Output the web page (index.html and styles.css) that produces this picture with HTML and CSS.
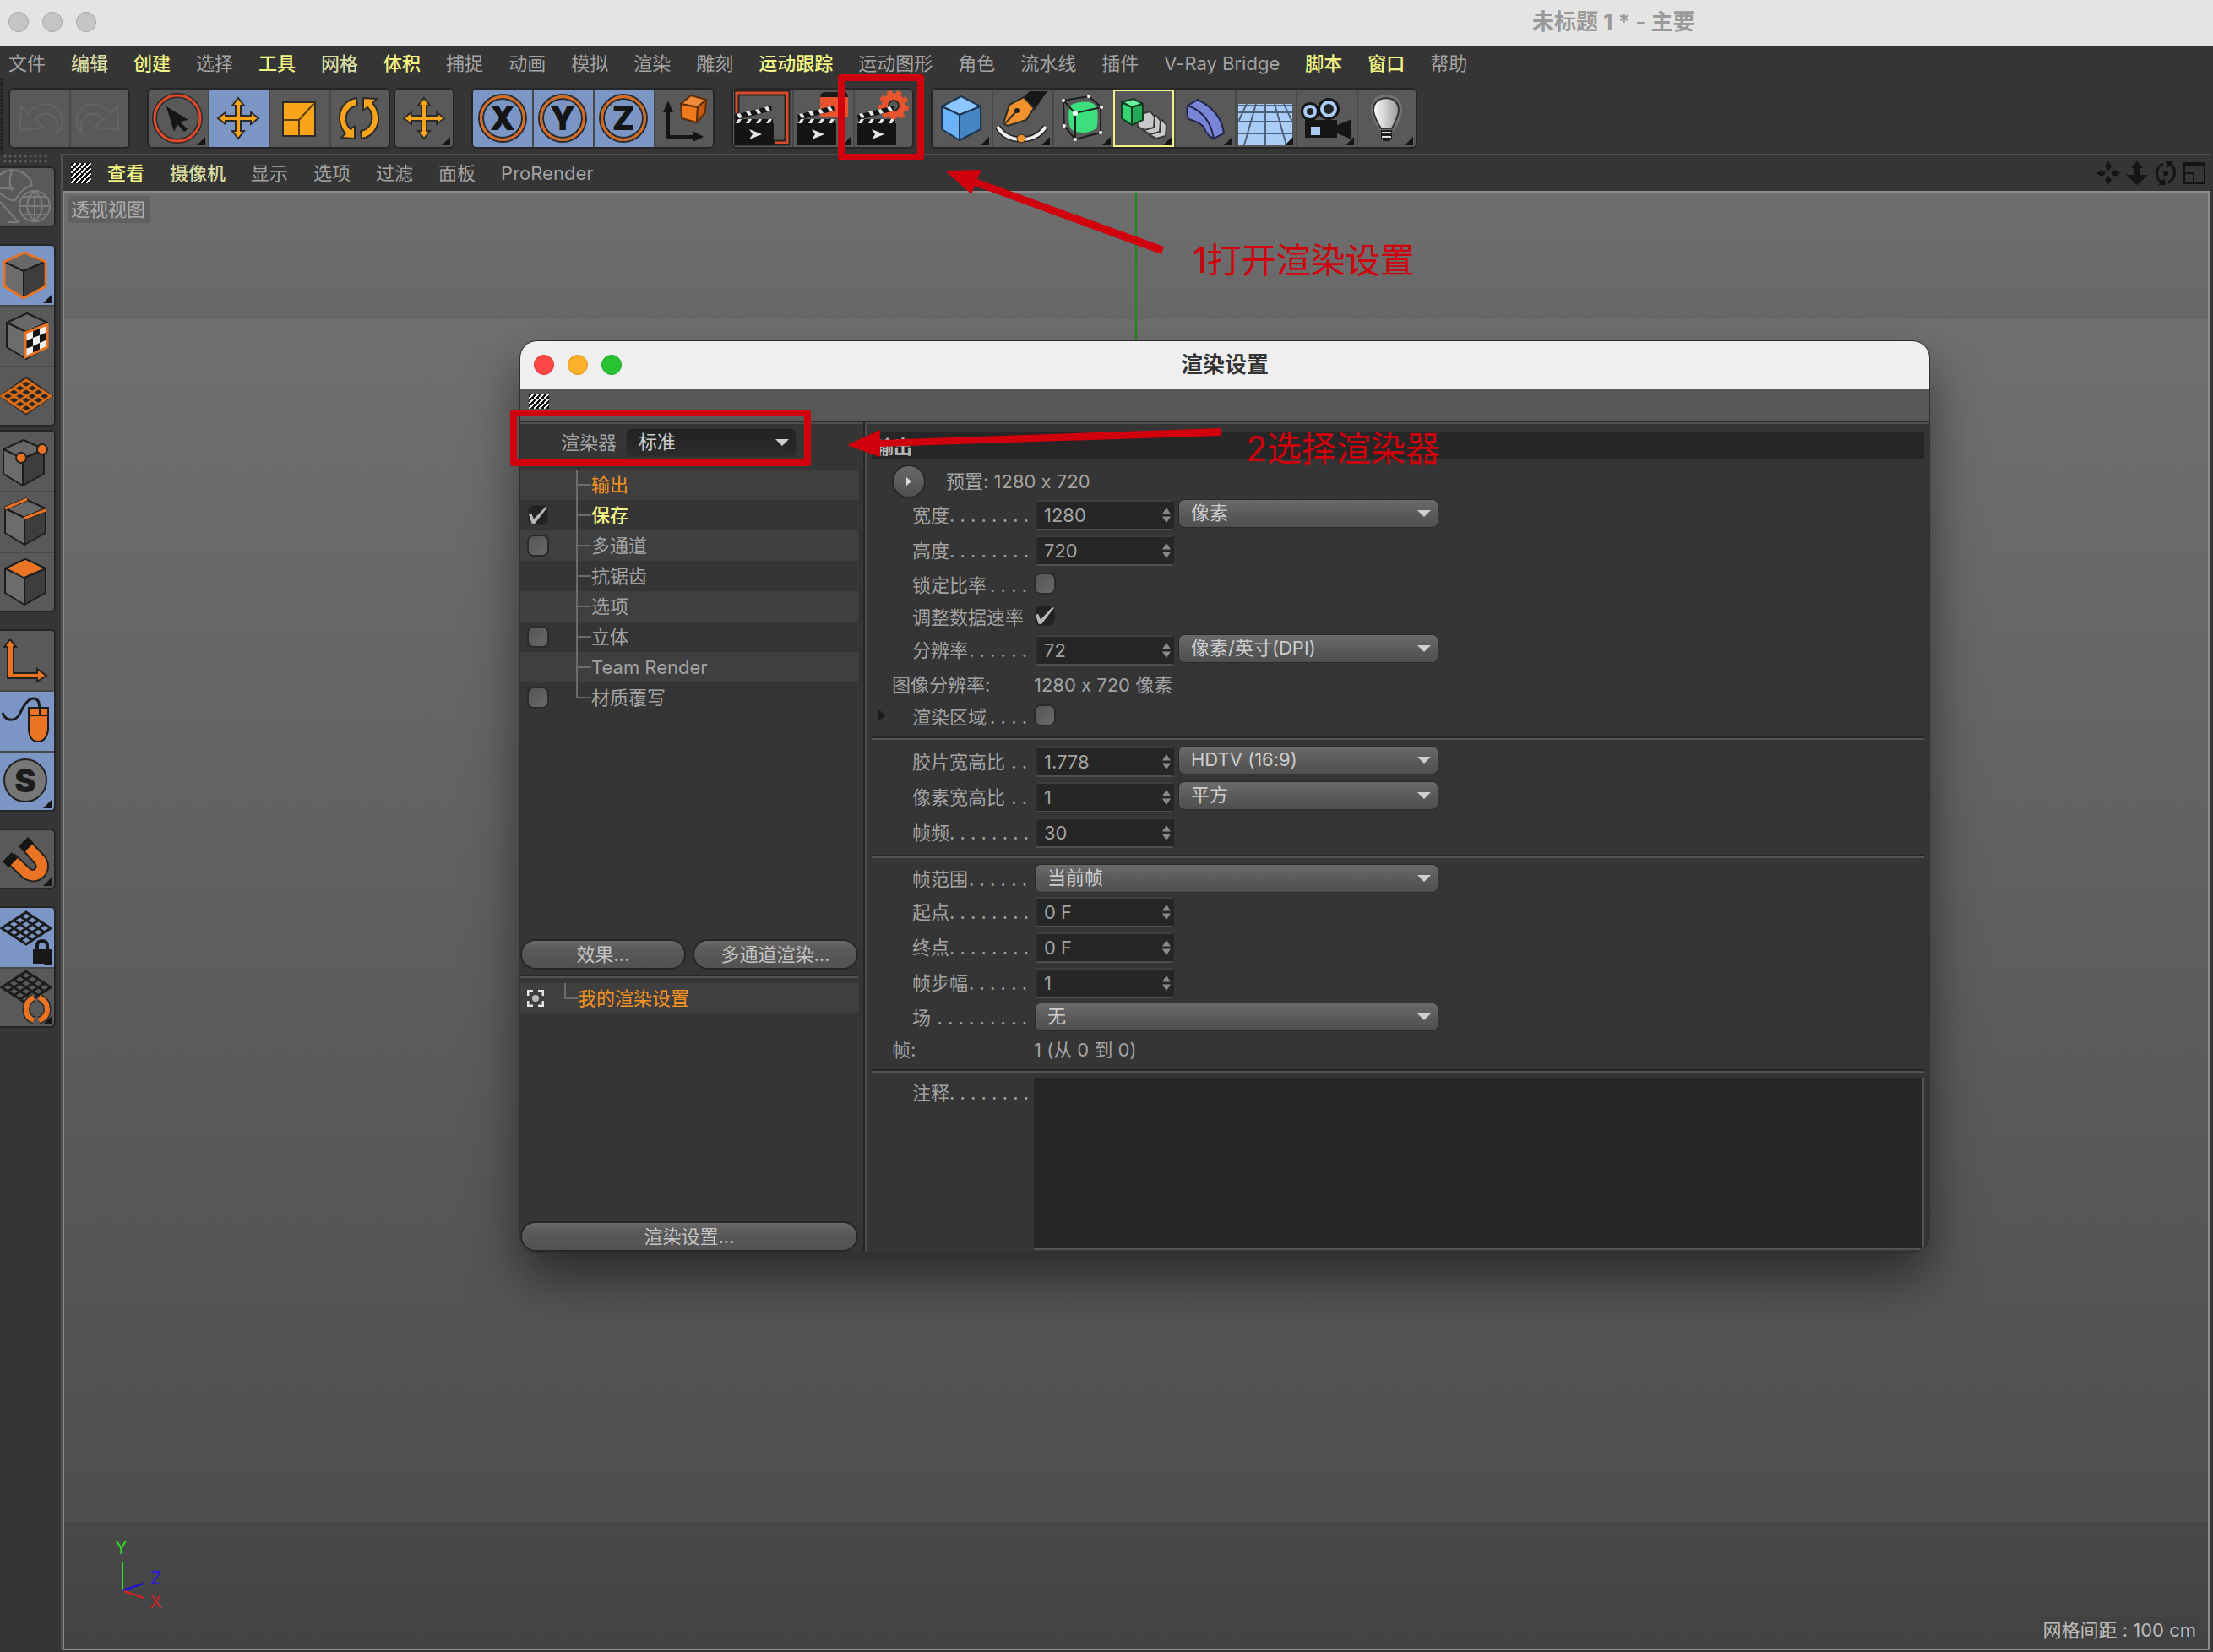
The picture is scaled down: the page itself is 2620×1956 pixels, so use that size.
FILE: index.html
```html
<!DOCTYPE html>
<html lang="zh-CN">
<head>
<meta charset="utf-8">
<title>未标题 1 * - 主要</title>
<link rel="stylesheet" href="styles.css">
</head>
<body>
<svg class="defs" aria-hidden="true">
  <defs>
    <symbol id="move" viewBox="0 0 68 68"><path d="M34 10l7 9h-4v12h12v-4l9 7-9 7v-4H37v12h4l-7 9-7-9h4V37H19v4l-9-7 9-7v4h12V19h-4z" fill="#f9a41b" stroke="#2b2b2b" stroke-width="2"/></symbol>
    <symbol id="clap" viewBox="0 0 46 48">
      <path d="M0 22h46v26H0z" fill="#141414"/>
      <path d="M0 12L43 1l1 6L1 18z" fill="#141414"/>
      <path d="M1 17h44v6H1z" fill="#141414"/>
      <path d="M2 11l4-1 3 5-4 1zM13 8l4-1 3 5-4 1zM24 6l4-1 3 5-4 1zM35 3l4-1 3 5-4 1zM4 17h4l-3 5H1zM16 17h4l-3 5h-4zM28 17h4l-3 5h-4zM40 17h4l-3 5h-4z" fill="#e8e8e8"/>
      <path d="M17 29l15 6-15 6 4-6z" fill="#e8e8e8"/>
    </symbol>
    <symbol id="cube" viewBox="0 0 52 56"><g stroke="#1c1c1c" stroke-width="2" stroke-linejoin="round"><path d="M26 1L2 12l23 11 25-11z" fill="#686868"/><path d="M2 12v29l23 14V23z" fill="#6c6c6c"/><path d="M50 12v29L25 55V23z" fill="#3d3d3d"/></g></symbol>
    <symbol id="mesh" viewBox="0 0 62 42"><path d="M31 2L2 21l29 19 29-19zM24 7l29 19M17 12l29 19M9 16l29 19M38 7L9 26M45 12L16 31M53 16L24 35" fill="none" stroke="currentColor" stroke-width="3"/></symbol>
    <g id="arcs" stroke="#2b2b2b" stroke-width="2" stroke-linejoin="round"><path d="M31 10C18 12 10 23 11 36c1 8 4 13 7 16l-5 5 16 1V43l-5 4c-5-5-7-12-4-19 2-5 6-8 12-9z"/><path d="M37 58c13-2 21-13 20-26-1-8-4-13-7-16l5-5-16-1v15l5-4c5 5 7 12 4 19-2 5-6 8-12 9z"/></g>
    <linearGradient id="bulb"><stop offset="0" stop-color="#fff"/><stop offset="1" stop-color="#999"/></linearGradient>
  </defs>
</svg>

<header class="titlebar">
  <div class="lights"><i></i><i></i><i></i></div>
  <h1>未标题 1 * - 主要</h1>
</header>

<nav class="menu main-menu">
  <a href="#">文件</a><a href="#" class="pale">编辑</a><a href="#" class="hot">创建</a><a href="#">选择</a><a href="#" class="hot">工具</a><a href="#" class="pale">网格</a><a href="#" class="hot">体积</a><a href="#">捕捉</a><a href="#">动画</a><a href="#">模拟</a><a href="#">渲染</a><a href="#">雕刻</a><a href="#" class="hot">运动跟踪</a><a href="#">运动图形</a><a href="#">角色</a><a href="#">流水线</a><a href="#">插件</a><a href="#">V-Ray Bridge</a><a href="#" class="hot">脚本</a><a href="#" class="hot">窗口</a><a href="#">帮助</a>
</nav>

<div class="toolbar">
  <div class="group">
    <button aria-label="撤销"><svg viewBox="0 0 68 68"><path d="M11 48l1-29 8 9c12-13 29-14 37-2 6 9 4 19-3 26 2-10 1-18-6-22-6-3-13-2-19 5l10 10z" fill="none" stroke="#646464" stroke-width="2"/></svg></button>
    <button aria-label="重做"><svg viewBox="0 0 68 68"><path d="M57 48l-1-29-8 9C36 15 19 14 11 26c-6 9-4 19 3 26-2-10-1-18 6-22 6-3 13-2 19 5L29 45z" fill="none" stroke="#646464" stroke-width="2"/></svg></button>
  </div>
  <div class="group">
    <button class="more" aria-label="选择"><svg viewBox="0 0 68 68"><circle cx="33" cy="34" r="27" fill="none" stroke="#2a2a2a" stroke-width="6"/><circle cx="33" cy="34" r="27" fill="none" stroke="#e0492b" stroke-width="3"/><path d="M20 20l26 16-10 2 9 9-4 3-8-9-4 9z" fill="#151515"/></svg></button>
    <button class="on" aria-label="移动"><svg><use href="#move"/></svg></button>
    <button aria-label="缩放"><svg viewBox="0 0 68 68"><path d="M15 15h38v40H15z" fill="#f9a41b" stroke="#2b2b2b" stroke-width="2"/><path d="M15 36h19v19M34 36l19-21" fill="none" stroke="#5a3c0c" stroke-width="2"/></svg></button>
    <button aria-label="旋转"><svg viewBox="0 0 68 68"><use href="#arcs" fill="#f9a41b"/></svg></button>
  </div>
  <div class="group near">
    <button class="more" aria-label="最近工具"><svg><use href="#move"/></svg></button>
  </div>
  <div class="group">
    <button class="on axis"><span>X</span></button>
    <button class="on axis"><span>Y</span></button>
    <button class="on axis"><span>Z</span></button>
    <button aria-label="坐标系统"><svg viewBox="0 0 68 68"><path d="M16 24v32h32" fill="none" stroke="#151515" stroke-width="4"/><path d="M10 27l6-14 6 14zM45 49l13 7-13 6z" fill="#151515"/><g stroke="#5e2c08" stroke-width="2" stroke-linejoin="round"><path d="M31 17l12-10 18 5-10 9z" fill="#f08a3a"/><path d="M31 17l20 4-1 18-18-5z" fill="#ef7a1c"/><path d="M61 12l-10 9-1 18 10-12z" fill="#c75a0c"/></g></svg></button>
  </div>
  <div class="group">
    <button aria-label="渲染活动视图"><svg viewBox="0 0 68 68"><path d="M3 4h60v59H3z" fill="none" stroke="#262626" stroke-width="7"/><path d="M3 28V4h60v59H48" fill="none" stroke="#d84a2b" stroke-width="3"/><use href="#clap" x="1" y="18" width="46" height="48"/></svg></button>
    <button class="more" aria-label="渲染到图片查看器"><svg viewBox="0 0 68 68"><path d="M31 9q0-6 6-6h22q5 0 5 6v24H31z" fill="#e8542d"/><path d="M31 9q0-6 6-6h22q5 0 5 6z" fill="#1c1c1c"/><use href="#clap" x="4" y="18" width="46" height="48"/></svg></button>
    <button aria-label="编辑渲染设置"><svg viewBox="0 0 68 68"><circle cx="47" cy="19" r="15" fill="none" stroke="#e8542d" stroke-width="6" stroke-dasharray="5.8 4.67"/><circle cx="47" cy="19" r="10" fill="none" stroke="#e8542d" stroke-width="9"/><circle cx="47" cy="19" r="6" fill="#595959" stroke="#262626" stroke-width="2"/><use href="#clap" x="4" y="18" width="46" height="48"/></svg></button>
  </div>
  <div class="group">
    <button class="more" aria-label="立方体"><svg viewBox="0 0 68 68"><g stroke="#1d3550" stroke-width="2" stroke-linejoin="round"><path d="M33 8L10 20l21 10 25-10z" fill="#8cc6ff"/><path d="M10 20v27l21 13V30z" fill="#6bb2f7"/><path d="M56 20v27L31 60V30z" fill="#4686c4"/></g></svg></button>
    <button class="more" aria-label="画笔"><svg viewBox="0 0 68 68"><path d="M36 9l7-7h21L48 25z" fill="#171717"/><path d="M36 9l12 13-9 14-22 7-5-3 7-22z" fill="#f2922e" stroke="#2b2b2b" stroke-width="2"/><path d="M14 40l14-15" stroke="#2b2b2b" stroke-width="2"/><circle cx="28" cy="25" r="3" fill="#222"/><path d="M5 44q9 15 28 15t29-15" fill="none" stroke="#222" stroke-width="7"/><path d="M5 44q9 15 28 15t29-15" fill="none" stroke="#eee" stroke-width="4"/><circle cx="33" cy="58" r="5" fill="#f2922e" stroke="#222"/></svg></button>
    <button class="more" aria-label="细分曲面"><svg viewBox="0 0 68 68"><path d="M18 22q0-5 12-7 14-2 19 4 4 6 2 24-2 7-17 8-12 0-15-6-3-10-1-23z" fill="#3be07c"/><path d="M11 13l30-5 15 13-31 7zM25 28v31l30-8V21M25 59L12 43l-1-30" fill="none" stroke="#1d1d1d" stroke-width="2"/><g fill="#fff"><circle cx="11" cy="13" r="2"/><circle cx="41" cy="8" r="2"/><circle cx="56" cy="21" r="2"/><circle cx="25" cy="28" r="3"/><circle cx="55" cy="51" r="2"/><circle cx="25" cy="59" r="2"/><circle cx="12" cy="43" r="2"/></g></svg></button>
    <button class="more picked" aria-label="阵列"><svg viewBox="0 0 68 68"><g fill="#c9c9c9" stroke="#3a3a3a" stroke-width="2"><path d="M40 40l16-4 5 6-1 13-11 3-8-4z"/><path d="M33 35l16-4 5 6-1 13-11 3-8-4z"/><path d="M26 30l16-4 5 6-1 13-11 3-8-4z"/></g><g stroke="#123d22" stroke-width="2" stroke-linejoin="round"><path d="M8 15l14-4 11 6-13 4z" fill="#6af09c"/><path d="M8 15l12 6v21L8 34z" fill="#35d472"/><path d="M33 17v19l-13 6V21z" fill="#25a858"/></g></svg></button>
    <button class="more" aria-label="变形器"><svg viewBox="0 0 68 68"><path d="M14 19l12-7q28 14 31 40l-12 6q-8-3-12-14-6-6-18-9-3-8-1-16z" fill="#7985d8" stroke="#23264a" stroke-width="2"/><path d="M14 19q26 9 31 39" fill="none" stroke="#23264a" stroke-width="2"/></svg></button>
    <button class="more" aria-label="地面"><svg viewBox="0 0 68 68"><path d="M2 17h64v49H2z" fill="#aacdf8"/><path d="M2 19h64M2 27h64M2 38h64M2 52h64M34 17v49M23 17L9 66M45 17l14 49M12 17L2 38M56 17l10 21" stroke="#4f6079" stroke-width="2"/></svg></button>
    <button class="more" aria-label="摄像机"><svg viewBox="0 0 68 68"><path d="M10 37h36v19H10zM48 43l14-6v20l-14-6z" fill="#151515" stroke="#151515" stroke-width="2"/><circle cx="15" cy="26" r="7" fill="#555" stroke="#151515" stroke-width="8"/><circle cx="15" cy="26" r="6" fill="#222" stroke="#a9cbf5" stroke-width="4"/><circle cx="37" cy="23" r="9" fill="#555" stroke="#151515" stroke-width="8"/><circle cx="37" cy="23" r="8" fill="#222" stroke="#a9cbf5" stroke-width="4"/><path d="M16 44h11v10H16z" fill="#a9cbf5"/></svg></button>
    <button class="more" aria-label="灯光"><svg viewBox="0 0 68 68"><path d="M34 6q20 1 19 20-1 9-9 22H26q-9-13-10-22Q15 7 34 6z" fill="#999" opacity=".4"/><path d="M34 10q15 1 15 15-1 8-8 21H28q-8-13-9-21 0-14 15-15z" fill="url(#bulb)" stroke="#333" stroke-width="2"/><path d="M28 48h13v9l-3 4h-7l-3-4z" fill="#1a1a1a"/><path d="M29 51h11M29 56h11" stroke="#ddd" stroke-width="2"/></svg></button>
  </div>
</div>

<div class="workspace">
  <aside class="tools">
    <i class="handle"></i>
    <div class="group">
      <button aria-label="转为可编辑对象"><svg viewBox="0 0 64 68"><g fill="none" stroke="#7c7c7c" stroke-width="2"><path d="M0 8q12-9 24-4 12 5 14 16-12 4-18 15-2 6-9 2L0 30M0 24h16M14 3q-5 14 0 24M0 40l22 24H10"/><circle cx="41" cy="45" r="18"/><path d="M23 45h36M41 27v36M27 34h28M27 55h28M41 27q-18 18 0 36M41 27q18 18 0 36"/></g></svg></button>
    </div>
    <div class="group">
      <button class="on more" aria-label="模型"><svg viewBox="0 0 64 68"><use href="#cube" x="3" y="6" width="52" height="56"/><path d="M29 7L5 18v29l23 14 26-14V18z" fill="none" stroke="#ea7423" stroke-width="3"/></svg></button>
      <button aria-label="纹理"><svg viewBox="0 0 64 68"><use href="#cube" x="6" y="7" width="52" height="56"/><path d="M30 31l26-10v27L30 60z" fill="#eee"/><path d="M39 27l8-3v10l-8 3zM30 41l9-4v10l-9 3zM47 34l9-4v9l-9 4zM39 47l8-4v10l-8 3z" fill="#151515"/><path d="M30 31l26-10v27L30 60z" fill="none" stroke="#ea7423" stroke-width="3"/></svg></button>
      <button class="orange" aria-label="工作平面"><svg viewBox="0 0 64 68"><path d="M31 14L2 35l29 20 29-20z" fill="#262626" stroke="#222" stroke-width="4"/><use href="#mesh" x="0" y="14" width="62" height="42"/></svg></button>
    </div>
    <div class="group near">
      <button aria-label="点"><svg viewBox="0 0 64 68"><use href="#cube" x="2" y="8" width="52" height="56"/><g fill="#ea7423" stroke="#222" stroke-width="2"><circle cx="25" cy="30" r="6"/><circle cx="50" cy="20" r="6"/></g></svg></button>
      <button aria-label="边"><svg viewBox="0 0 64 68"><use href="#cube" x="4" y="7" width="52" height="56"/><path d="M6 19L32 8M28 31l26-10" stroke="#222" stroke-width="5"/><path d="M6 19L32 8M28 31l26-10" stroke="#ea7423" stroke-width="3"/></svg></button>
      <button aria-label="多边形"><svg viewBox="0 0 64 68"><use href="#cube" x="4" y="7" width="52" height="56"/><path d="M30 9L9 19l19 10 23-10z" fill="#ea7423"/></svg></button>
    </div>
    <div class="group">
      <button aria-label="启用轴心"><svg viewBox="0 0 64 68"><path d="M12 9l7 9h-3v31h28v-5l11 8-11 7v-4H9V18H5z" fill="#ea7423" stroke="#222" stroke-width="2"/></svg></button>
      <button class="on" aria-label="微调"><svg viewBox="0 0 64 68"><path d="M3 25c4 11 16 11 21 0S34 7 41 8c5 1 6 5 6 20" fill="none" stroke="#1c1c1c" stroke-width="3"/><path d="M34 19h23v26q-2 14-12 14T34 45z" fill="#ea7423" stroke="#1c1c1c" stroke-width="2"/><path d="M34 28h23M47 18v10" stroke="#1c1c1c" stroke-width="2"/></svg></button>
      <button class="on more solo"><span>S</span></button>
    </div>
    <div class="group">
      <button class="more" aria-label="捕捉"><svg viewBox="0 0 64 68"><path d="M36 13l17 18c6 8 5 18-1 24-8 8-18 6-25 1L8 38l10-9 17 16c3 3 6 2 7 0s1-4-1-6L26 22z" fill="#ea7423" stroke="#222" stroke-width="2"/><path d="M33 8l7 7-11 11-7-7zM14 26l7 7-11 11-7-7z" fill="#151515"/></svg></button>
    </div>
    <div class="group">
      <button class="on more" aria-label="锁定工作平面"><svg viewBox="0 0 64 68"><use href="#mesh" x="0" y="2" width="62" height="42"/><path d="M39 48h3v-4q0-8 8-8t8 8v4h3v17H39z" fill="#181818"/><path d="M46 48v-4q0-4 4-4t4 4v4z" fill="#7b96c4"/></svg></button>
      <button class="more" aria-label="平面工作平面"><svg viewBox="0 0 64 68"><use href="#mesh" x="0" y="2" width="62" height="42"/><g fill="none"><path d="M40 35q-9 4-9 14t9 13M46 35q10 4 10 14t-10 13" stroke="#2b2b2b" stroke-width="9"/><path d="M40 35q-9 4-9 14t9 13M46 35q10 4 10 14t-10 13" stroke="#ea7423" stroke-width="6"/></g></svg></button>
    </div>
  </aside>

  <main class="panel">
    <div class="menu view-menu">
      <i class="grip"></i>
      <a href="#" class="hot">查看</a><a href="#" class="pale">摄像机</a><a href="#">显示</a><a href="#">选项</a><a href="#">过滤</a><a href="#">面板</a><a href="#">ProRender</a>
      <div class="nav-icons">
        <svg viewBox="0 0 28 28"><path d="M14 0l4 6-4 5-4-5zM14 17l4 5-4 6-4-6zM0 14l6-4 5 4-5 4zM17 14l5-4 6 4-6 4z" fill="#141414"/></svg>
        <svg viewBox="0 0 28 28"><path d="M14 0l7 8h-4v8h10L14 28 1 16h10V8H7z" fill="#141414"/></svg>
        <svg viewBox="0 0 28 28"><path d="M11 3C2 7 1 19 9 25M17 25c9-4 10-16 2-22" fill="none" stroke="#141414" stroke-width="3"/><path d="M14 0h9l-7 8zM14 28H5l7-8z" fill="#141414"/><circle cx="14" cy="14" r="3" fill="#141414"/></svg>
        <svg viewBox="0 0 28 28"><path d="M2 2h24v24H2zM2 14h11v12" fill="none" stroke="#141414" stroke-width="2"/><path d="M1 1h26v4H1z" fill="#141414"/></svg>
      </div>
    </div>

    <div class="view">
      <span class="tag">透视视图</span>
      <span class="tag scale">网格间距 : 100 cm</span>
      <i class="y-line"></i>
      <svg class="gizmo" viewBox="0 0 80 100"><g fill="none" stroke-width="2"><path d="M15 38v33" stroke="#2ee620"/><path d="M15 71l25-8" stroke="#1d08e8"/><path d="M17 72l23 8" stroke="#e61c24"/></g><text x="6" y="28" fill="#35d62a">Y</text><text x="48" y="64" fill="#2a18d8">Z</text><text x="47" y="92" fill="#c8262c">X</text></svg>

      <section class="dialog">
        <header>
          <div class="lights live"><i></i><i></i><i></i></div>
          <h2>渲染设置</h2>
        </header>
        <div class="strip"><i class="grip"></i></div>
        <div class="body">
          <div class="side">
            <div class="renderer">
              <label for="renderer">渲染器</label>
              <span class="select dark"><select id="renderer"><option>标准</option></select></span>
            </div>
            <ul class="tree">
              <li><span class="name current">输出</span></li>
              <li><input type="checkbox" id="t1" checked><label for="t1" class="name hot">保存</label></li>
              <li><input type="checkbox" id="t2"><label for="t2" class="name">多通道</label></li>
              <li><span class="name">抗锯齿</span></li>
              <li><span class="name">选项</span></li>
              <li><input type="checkbox" id="t3"><label for="t3" class="name">立体</label></li>
              <li><span class="name">Team Render</span></li>
              <li><input type="checkbox" id="t4"><label for="t4" class="name">材质覆写</label></li>
            </ul>
            <div class="pair"><button class="pill">效果...</button><button class="pill">多通道渲染...</button></div>
            <hr>
            <ul class="tree presets">
              <li><svg viewBox="0 0 20 20"><path d="M1 7V1h6M13 1h6v6M19 13v6h-6M7 19H1v-6" fill="none" stroke="#e4e4e4" stroke-width="3"/><circle cx="10" cy="10" r="4" fill="#bbb"/></svg><span class="name current">我的渲染设置</span></li>
            </ul>
            <div class="foot"><button class="pill">渲染设置...</button></div>
          </div>

          <form class="output">
            <h3>输出</h3>
            <div class="preset"><button type="button" class="round" aria-label="预置"></button><span>预置: 1280 x 720</span></div>
            <div class="row"><label for="f1">宽度<span>. . . . . . . .</span></label><span class="field"><input id="f1" value="1280"><i></i></span><span class="select"><select aria-label="单位"><option>像素</option></select></span></div>
            <div class="row"><label for="f2">高度<span>. . . . . . . .</span></label><span class="field"><input id="f2" value="720"><i></i></span></div>
            <div class="row low"><label for="f3">锁定比率<span>. . . .</span></label><input type="checkbox" id="f3"></div>
            <div class="row low"><label for="f4">调整数据速率</label><input type="checkbox" id="f4" checked></div>
            <div class="row"><label for="f5">分辨率<span>. . . . . .</span></label><span class="field"><input id="f5" value="72"><i></i></span><span class="select"><select aria-label="分辨率单位"><option>像素/英寸(DPI)</option></select></span></div>
            <div class="row low info"><span>图像分辨率:</span><output>1280 x 720 像素</output></div>
            <div class="row low fold"><label for="f6">渲染区域<span>. . . .</span></label><input type="checkbox" id="f6"></div>
            <hr>
            <div class="row"><label for="f7">胶片宽高比<span>. .</span></label><span class="field"><input id="f7" value="1.778"><i></i></span><span class="select"><select aria-label="胶片格式"><option>HDTV (16:9)</option></select></span></div>
            <div class="row"><label for="f8">像素宽高比<span>. .</span></label><span class="field"><input id="f8" value="1"><i></i></span><span class="select"><select aria-label="像素格式"><option>平方</option></select></span></div>
            <div class="row"><label for="f9">帧频<span>. . . . . . . .</span></label><span class="field"><input id="f9" value="30"><i></i></span></div>
            <hr>
            <div class="row low"><label for="f10">帧范围<span>. . . . . .</span></label><span class="select wide"><select id="f10"><option>当前帧</option></select></span></div>
            <div class="row"><label for="f11">起点<span>. . . . . . . .</span></label><span class="field"><input id="f11" value="0 F"><i></i></span></div>
            <div class="row"><label for="f12">终点<span>. . . . . . . .</span></label><span class="field"><input id="f12" value="0 F"><i></i></span></div>
            <div class="row"><label for="f13">帧步幅<span>. . . . . .</span></label><span class="field"><input id="f13" value="1"><i></i></span></div>
            <div class="row low"><label for="f14">场<span>. . . . . . . . .</span></label><span class="select wide"><select id="f14"><option>无</option></select></span></div>
            <div class="row low info"><span>帧:</span><output>1 (从 0 到 0)</output></div>
            <hr>
            <div class="row notes"><label for="f15">注释<span>. . . . . . . .</span></label><textarea id="f15"></textarea></div>
          </form>
        </div>
      </section>
    </div>
  </main>
</div>

<div class="notes-layer">
  <svg viewBox="0 0 1720 600"><g fill="none" stroke="#d0000d" stroke-width="8" stroke-linejoin="round"><rect x="996" y="92" width="94" height="94"/><rect x="608" y="489" width="348" height="59"/></g><g fill="#d0000d"><path d="M1119 202l43-1-5 11 221 80-3 9-221-81-4 10z"/><path d="M1003 527l39-18v12l403-14v9l-403 13v12z"/></g></svg>
  <p class="step one">1打开渲染设置</p>
  <p class="step two">2选择渲染器</p>
</div>
</body>
</html>
```
FILE: styles.css
```css
* { box-sizing: border-box; }
body {
  margin: 0;
  min-height: 100vh;
  display: flex;
  flex-direction: column;
  position: relative;
  background: #353535;
  color: #a3a3a3;
  font: 22px/32px Inter, "Noto Sans CJK SC", sans-serif;
  font-feature-settings: "calt" 0;
  overflow-x: hidden;
}
button, input, select, textarea { font: inherit; font-feature-settings: inherit; color: inherit; margin: 0; padding: 0; border: 0; background: none; }
a { color: inherit; text-decoration: none; }
h1, h2, h3, p, ul { margin: 0; padding: 0; list-style: none; }
.defs { position: absolute; width: 0; height: 0; }
.hot { color: #f3f584; font-weight: 500; }
.pale { color: #d9dba0; font-weight: 500; }

/* main window title */
.titlebar { display: flex; align-items: center; height: 55px; background: #e4e4e4; border-bottom: 1px solid #111; padding: 0 0 2px 10px; }
.titlebar h1 { margin-left: 1700px; font-size: 26px; line-height: 32px; font-weight: 700; color: #999; white-space: nowrap; }
.lights { display: flex; gap: 16px; }
.lights i { width: 24px; height: 24px; border-radius: 50%; background: #c5c5c5; border: 1px solid #a6a6a6; }
.lights.live i:nth-child(1) { background: #fd4747; border-color: #e03638; }
.lights.live i:nth-child(2) { background: #fdb02a; border-color: #dd951c; }
.lights.live i:nth-child(3) { background: #29c232; border-color: #1fa626; }

.menu { display: flex; align-items: center; gap: 30px; white-space: nowrap; }
.main-menu { height: 39px; padding-left: 10px; }

/* icon buttons */
.toolbar { display: flex; gap: 20px; padding: 10px 0 6px 10px;
  background: radial-gradient(circle at 2px 2px, #1c1c1c 1px, transparent 2px) 0 18px / 4px 4px repeat-y; }
.group { display: flex; border: 2px solid #262626; border-radius: 6px; background: #595959; overflow: hidden; }
.group button { position: relative; display: flex; align-items: center; justify-content: center; width: 72px; height: 68px; flex: none; }
.group svg { width: 68px; height: 68px; flex: none; }
.toolbar button:first-child, .toolbar button:last-child { width: 70px; }
.toolbar button:only-child { width: 68px; }
.toolbar button + button { box-shadow: inset 2px 0 #484848; }
.toolbar .near { margin-left: -16px; }
.group .on { background: #7b96c4; }
.toolbar .picked { box-shadow: inset 0 0 0 2px #f0f28a; }
.more::after { content: ""; position: absolute; right: 3px; bottom: 2px; width: 10px; height: 10px; background: #151515; clip-path: polygon(100% 0, 100% 100%, 0 100%); }
.axis span {
  width: 54px; height: 54px; border-radius: 50%; border: 3px solid #d86a1e;
  box-shadow: 0 0 0 2px #2a2a2a, inset 0 0 0 2px #2a2a2a;
  font-size: 38px; line-height: 48px; font-weight: 900; color: #151515; text-align: center;
}

.workspace { flex: 1; display: flex; }
.tools { width: 72px; display: flex; flex-direction: column; gap: 20px; align-items: flex-start; }
.handle { width: 54px; height: 12px; margin: 1px 0 -18px 4px; background: radial-gradient(circle at 2px 2px, #5c5c5c 1px, transparent 2px) 0 0 / 6px 6px; }
.tools .group { flex-direction: column; border-left: 0; border-radius: 0 6px 6px 0; }
.tools .near { margin-top: -16px; }
.tools button { width: 64px; height: 72px; color: #1c1c1c; }
.tools button:first-child, .tools button:last-child { height: 70px; }
.tools button:only-child { height: 68px; }
.tools button + button { box-shadow: inset 0 2px #484848; }
.tools svg { width: 64px; }
.tools .orange { color: #d96c14; }
.solo span { width: 52px; height: 52px; margin-right: 4px; border-radius: 50%; border: 2px solid #222; background: #777; font-size: 38px; line-height: 48px; font-weight: 900; text-align: center; }

/* viewport panel */
.panel { flex: 1; display: flex; flex-direction: column; margin: 0 4px 2px 0; border: 2px solid #4f4f4f; border-width: 2px 0 0 2px; }
.view-menu { height: 42px; padding: 0 4px 0 10px; }
.grip { width: 24px; height: 24px; background: linear-gradient(135deg, transparent 34%, #eee 34% 66%, transparent 66%) 0 0 / 6px 6px #111; }
.view-menu .grip { margin-right: -11px; }
.nav-icons { margin-left: auto; display: flex; gap: 6px; }
.nav-icons svg { width: 28px; height: 28px; }
.view {
  flex: 1; position: relative; border: 2px solid #8c8c8c;
  background: linear-gradient(#6e6e6e, #686868 150px, #707070 150px, #4e4e4e calc(100% - 150px), #494949 calc(100% - 150px), #434343);
}
.tag { position: absolute; left: 4px; top: 4px; padding: 0 6px 0 4px; border-radius: 4px; background: rgba(60, 60, 60, .25); color: #acacac; }
.scale { left: auto; top: auto; right: 8px; bottom: 6px; color: #bcbcbc; }
.y-line { position: absolute; left: 1268px; top: 0; width: 2px; height: 180px; background: #1c8a1c; }
.gizmo { position: absolute; left: 54px; bottom: 40px; width: 80px; height: 100px; font-size: 22px; }

/* render settings window */
.dialog { position: absolute; left: 540px; right: 330px; top: 176px; border-radius: 20px; overflow: hidden; background: #353535; box-shadow: 0 0 0 1px #303030, 0 30px 60px rgba(0, 0, 0, .5); }
.dialog header { display: grid; grid-template-columns: 1fr auto 1fr; align-items: center; height: 57px; padding: 0 16px; background: #efefef; border-bottom: 1px solid #2e2e2e; }
.dialog h2 { font-size: 26px; line-height: 32px; font-weight: 700; color: #333; }
.strip { height: 39px; padding: 5px 10px; background: #585858; border-bottom: 2px solid #2a2a2a; box-shadow: 0 2px #505050; }
.strip .grip { display: block; height: 18px; }
.body { display: flex; }
.dialog hr { height: 4px; margin: 2px 0 8px; border: 0; border-top: 2px solid #262626; border-bottom: 2px solid #545454; }

.side { width: 408px; display: flex; flex-direction: column; flex: none; padding-right: 8px; }
.renderer { display: flex; gap: 12px; align-items: center; padding: 8px 0 16px 48px; }
.select { position: relative; width: 306px; height: 32px; border-radius: 6px; background: linear-gradient(#6a6a6a, #585858 60%, #505050); box-shadow: 0 0 0 1px #2a2a2a; color: #cdcdcd; }
.select select { appearance: none; width: 100%; height: 30px; padding: 0 40px 0 14px; line-height: 30px; display: block; }
.select::after { content: ""; position: absolute; right: 8px; top: 12px; width: 16px; height: 8px; background: #d0d0d0; clip-path: polygon(0 0, 100% 0, 50% 100%); pointer-events: none; }
.select.dark { width: 200px; background: linear-gradient(#222, #2c2c2c); box-shadow: 0 0 0 1px #303030; }
.select.wide { width: 476px; }

input[type=checkbox] { appearance: none; width: 22px; height: 22px; border-radius: 6px; background: linear-gradient(135deg, #555, #696969); box-shadow: 0 0 0 2px #2a2a2a; flex: none; }
input[type=checkbox]:checked { background: #222; box-shadow: 0 0 0 1px #2a2a2a; }
input[type=checkbox]:checked::before { content: ""; display: block; width: 22px; height: 22px; background: #b8b8b8; clip-path: polygon(0 45%, 14% 40%, 27% 70%, 90% 4%, 100% 8%, 32% 96%, 16% 94%); }

.tree li { position: relative; display: flex; align-items: center; height: 36px; padding-left: 10px; }
.tree li:nth-child(odd) { background: #3f3f3f; }
.tree .name { margin-left: auto; width: 316px; }
.tree .current { color: #f7931e; }
.tree li::before { content: ""; position: absolute; left: 66px; top: 0; height: 36px; border-left: 2px solid #6c6c6c; }
.tree li:last-child::before { height: 19px; }
.tree li::after { content: ""; position: absolute; left: 68px; top: 17px; width: 16px; height: 2px; background: #6c6c6c; }
.tree svg { width: 20px; height: 20px; }
.tree.presets li { padding-left: 8px; }
.presets .name { width: 332px; }
.presets li::before { left: 52px; }
.presets li::after { left: 54px; width: 14px; }
.pair { margin-top: auto; display: flex; gap: 12px; padding: 0 2px; }
.pill { flex: 1; height: 32px; border-radius: 16px; background: linear-gradient(#6a6a6a, #5a5a5a 30%, #525252); box-shadow: 0 0 0 2px #272727; color: #c4c4c4; line-height: 30px; }
.side hr { margin: 8px 0 6px; }
.foot { display: flex; margin-top: 248px; padding: 0 2px 2px; }

.output { flex: 1; border-left: 2px solid #4c4c4c; box-shadow: -2px 0 #262626; padding: 12px 6px 2px; }
.output h3 { height: 32px; padding-left: 4px; background: #262626; font-size: 22px; line-height: 34px; font-weight: 700; color: #b8b8b8; }
.preset { display: flex; gap: 26px; align-items: center; margin: 8px 0 4px 26px; }
.round { width: 36px; height: 36px; border-radius: 50%; background: linear-gradient(#686868, #505050); box-shadow: 0 0 0 2px #272727; display: grid; place-items: center; }
.round::before { content: ""; width: 6px; height: 10px; background: #ddd; clip-path: polygon(0 0, 100% 50%, 0 100%); }
.row { display: flex; align-items: flex-start; gap: 6px; padding-left: 48px; height: 42px; }
.row label { display: flex; justify-content: space-between; width: 140px; height: 36px; padding-right: 4px; line-height: 36px; white-space: nowrap; }
.row.low { height: 38px; }
.low label, .low > span, output { line-height: 34px; }
.low input[type=checkbox] { margin: 4px 0; }
.row.info { padding-left: 24px; gap: 0; }
.info span { width: 168px; }
.fold { position: relative; }
.fold::before { content: ""; position: absolute; left: 8px; top: 8px; width: 9px; height: 14px; background: #1c1c1c; clip-path: polygon(0 0, 100% 50%, 0 100%); }
.field { display: flex; align-items: center; width: 164px; height: 36px; background: #262626; border: 2px solid; border-color: #3e3e3e #262626 #505050 #303030; }
.field input { flex: 1; width: 100px; height: 32px; padding-left: 8px; }
.field i { width: 10px; height: 18px; margin-right: 2px; background: #8a8a8a; clip-path: polygon(50% 0, 100% 42%, 0 42%, 0 58%, 100% 58%, 50% 100%, 0 58%, 0 42%); }
.output .notes { height: auto; gap: 4px; }
.output hr:last-of-type { margin-bottom: 6px; }
.notes textarea { flex: 1; height: 204px; background: #262626; border-right: 2px solid #545454; border-bottom: 2px solid #545454; resize: none; display: block; }

/* tutorial marks drawn over the interface */
.notes-layer { position: absolute; left: 0; top: 0; pointer-events: none; color: #d0000d; }
.notes-layer svg { display: block; width: 1720px; height: 600px; }
.step { position: absolute; font-size: 41px; line-height: 48px; white-space: nowrap; }
.one { left: 1412px; top: 284px; }
.two { left: 1475px; top: 507px; }
```
